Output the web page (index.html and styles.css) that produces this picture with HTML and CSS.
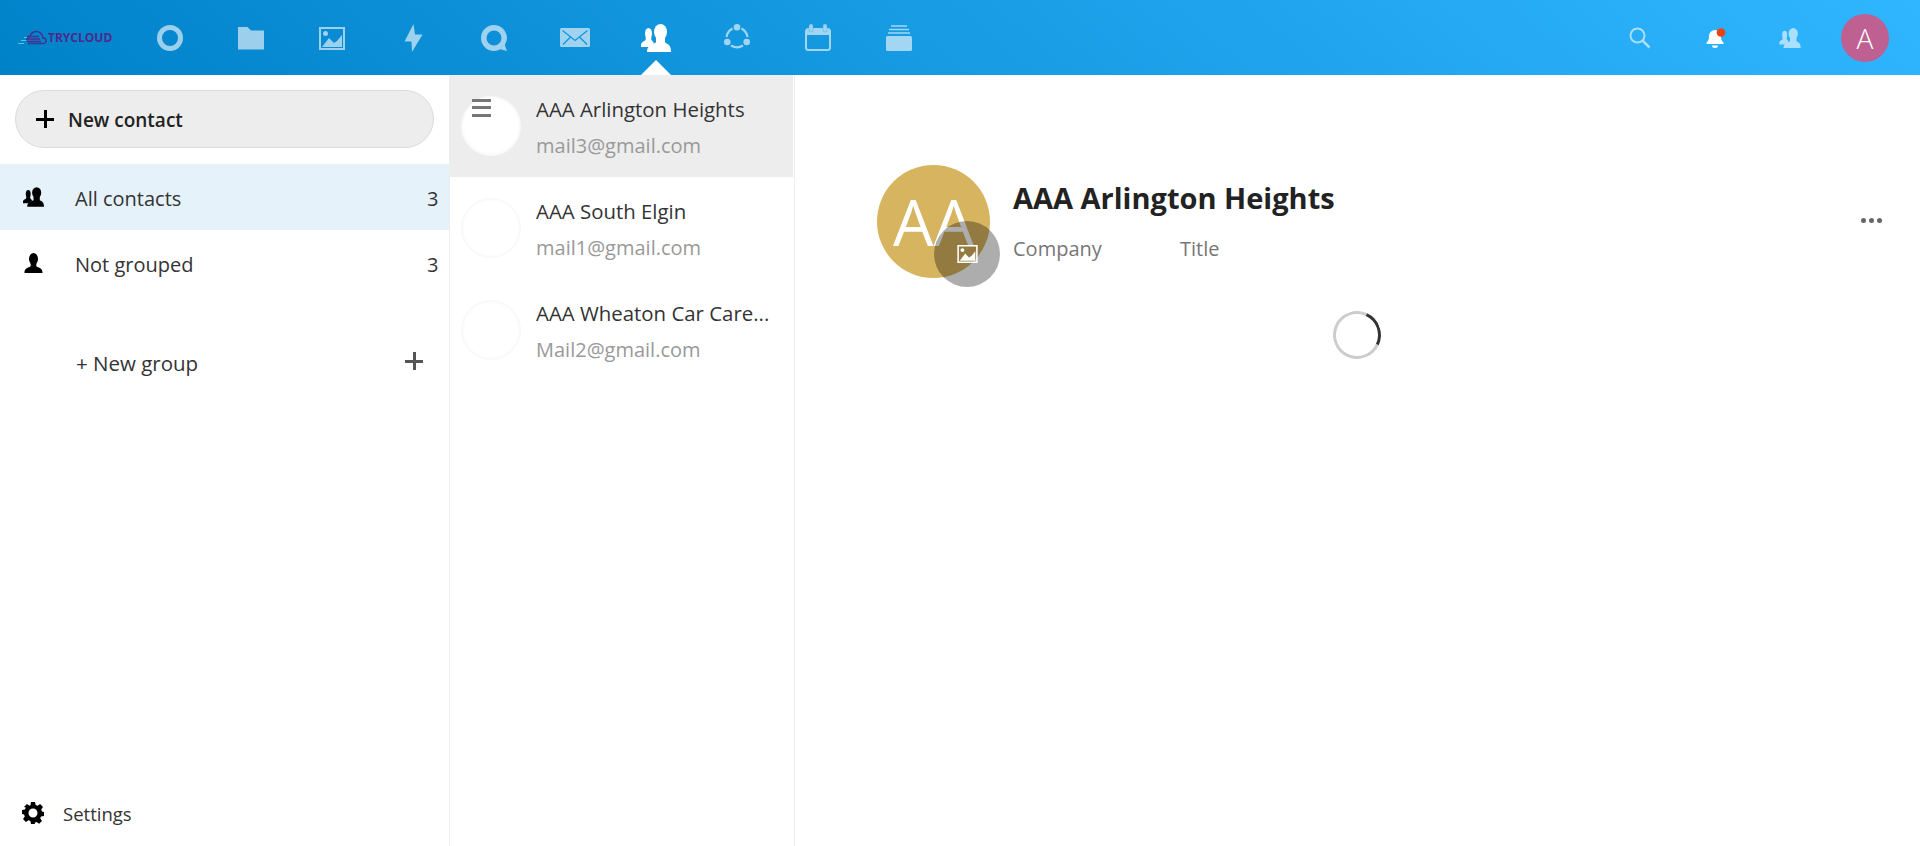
FILE: index.html
```html
<!DOCTYPE html>
<html lang="en">

<head>
    <meta charset="UTF-8">
    <meta name="viewport" content="width=device-width, initial-scale=1.0">
    <title>Contacts - TryCloud</title>
    <link rel="stylesheet" href="styles.css">
</head>

<body>
    <svg class="defs" width="0" height="0">
        <defs>
            <g id="people" fill="currentColor">
                <ellipse cx="19.5" cy="8" rx="6.5" ry="8" />
                <path d="M6 28C6 22 10 20.500 15 18.500L15 14h9v4.500C28 20.500 30 22 30 28z" />
                <ellipse cx="7.5" cy="9.5" rx="3.5" ry="5.5" />
                <path d="M0 21C0 18.500 1.500 18 4 16.500C5 15.500 5 14 4.500 13h6c-.5 1-.5 2.500 .5 3.500l2 2.500L8 23H0z" />
            </g>
        </defs>
    </svg>

    <header class="topbar">
        <div class="logo">
            <svg class="logo-cloud" width="29" height="16" viewBox="0 0 29 16">
                <path d="M10 13.500H25.500C29 13.500 29 8 25 8C25 4 21 1 17.500 1.500C14.500 2 12.500 4 12 6.500C10.500 6.500 9 8 9 9.500" fill="none" stroke="#4b2a8c" stroke-width="1.500" />
                <path d="M9 6.500h12M8 9h14M9 11.500h14" stroke="#4b2a8c" stroke-width="1.300" />
                <path d="M0 13.500h6M3 10.500h5M6 7.500h3" stroke="#5fd0d8" stroke-width="1.200" />
            </svg>
            <span>TRYCLOUD</span>
        </div>

        <nav class="apps">
            <a class="app">
                <svg width="26" height="26" viewBox="0 0 26 26"><circle cx="13" cy="13" r="10.500" fill="none" stroke="#fff" stroke-width="5" /></svg>
            </a>
            <a class="app">
                <svg width="26" height="26" viewBox="0 0 26 26"><path d="M0 2h9.500l3.500 3.500h13V24.500H0z" fill="#fff" /></svg>
            </a>
            <a class="app">
                <svg width="26" height="26" viewBox="0 0 26 26"><path fill-rule="evenodd" d="M0 2h26v23H0zM2 4v19h22V4z" fill="#fff" /><circle cx="6.500" cy="8.500" r="2.500" fill="#fff" /><path d="M3 22l7-9 5 5 3-2 5-6v12z" fill="#fff" /></svg>
            </a>
            <a class="app">
                <svg width="26" height="28" viewBox="0 0 26 28"><path d="M13.500 0L4.500 17.500H11.500L12 28L22.500 10.500H15z" fill="#fff" /></svg>
            </a>
            <a class="app">
                <svg width="26" height="26" viewBox="0 0 26 26"><path fill-rule="evenodd" d="M13 0a13 13 0 0 0 0 26c2.500 0 4.500-.7 6.300-1.700L26 26l-2.200-6A13 13 0 0 0 13 0zm0 5.500a7.500 7.500 0 1 1 0 15 7.500 7.500 0 0 1 0-15z" fill="#fff" /></svg>
            </a>
            <a class="app">
                <svg width="30" height="20" viewBox="0 0 30 20"><rect y="0" width="30" height="19" rx="1.500" fill="#fff" /><path d="M2.500 2.500L15 12.500L27.500 2.500M3 16.500L10.500 9M27 16.500L19.500 9" fill="none" stroke="#1797e3" stroke-width="1.300" /></svg>
            </a>
            <a class="app app-active">
                <svg class="people" width="30" height="28" viewBox="0 0 30 28"><use href="#people" /></svg>
            </a>
            <a class="app">
                <svg width="26" height="27" viewBox="0 0 26 27"><path d="M8.500 4.500A11.500 11.500 0 0 0 2.500 13M7 21.500a11.500 11.500 0 0 0 12 0M23.500 13A11.500 11.500 0 0 0 17.500 4.500" fill="none" stroke="#fff" stroke-width="2.200" /><circle cx="13" cy="3.300" r="3.300" fill="#fff" /><circle cx="3.300" cy="18" r="3.300" fill="#fff" /><circle cx="22.700" cy="18" r="3.300" fill="#fff" /></svg>
            </a>
            <a class="app">
                <svg width="26" height="27" viewBox="0 0 26 27"><rect x="1" y="5" width="24" height="21" rx="2.500" fill="none" stroke="#fff" stroke-width="2" /><rect x="1" y="5" width="24" height="6" fill="#fff" /><rect x="4" y="0" width="4" height="8" rx="2" fill="#fff" stroke="#62b9ec" stroke-width=".5" /><rect x="18" y="0" width="4" height="8" rx="2" fill="#fff" stroke="#62b9ec" stroke-width=".5" /></svg>
            </a>
            <a class="app">
                <svg width="26" height="26" viewBox="0 0 26 26"><rect y="11" width="26" height="15" rx="1.500" fill="#fff" /><path d="M2 8h22M3 4.500h20M5 1h16" stroke="#fff" stroke-width="1.500" /></svg>
            </a>
        </nav>

        <div class="top-right">
            <a class="tool">
                <svg width="22" height="22" viewBox="0 0 22 22"><circle cx="8.500" cy="8.500" r="7" fill="none" stroke="#fff" stroke-width="2" /><path d="M13.500 13.500l7 7" stroke="#fff" stroke-width="2.500" /></svg>
            </a>
            <a class="tool tool-on">
                <svg width="24" height="22" viewBox="0 0 24 22"><path d="M12 3a6 6 0 0 0-6 6c0 3-.5 5-2.500 6.500V17h17v-1.500C18.500 14 18 12 18 9a6 6 0 0 0-6-6z" fill="#fff" /><path d="M9 18.500h6a3 2.500 0 0 1-6 0z" fill="#fff" /><circle cx="18" cy="5.500" r="4.300" fill="#f1410f" /></svg>
            </a>
            <a class="tool">
                <svg class="people" width="22" height="20" viewBox="0 0 30 28"><use href="#people" /></svg>
            </a>
            <div class="user">A</div>
        </div>
        <span class="arrow"></span>
    </header>

    <div class="layout">
        <aside class="sidebar">
            <div class="new-wrap">
                <button class="new-contact"><span class="plus plus-black"></span>New contact</button>
            </div>

            <ul class="groups">
                <li class="group group-active">
                    <svg class="group-icon" width="21" height="20" viewBox="0 0 30 28"><use href="#people" /></svg>
                    <span class="group-name">All contacts</span>
                    <span class="count">3</span>
                </li>
                <li class="group">
                    <svg class="group-icon" width="21" height="20" viewBox="0 0 20 20"><ellipse cx="10" cy="6" rx="4.500" ry="6" /><path d="M1 20c0-3.500 1-4.500 5-6 1.500-.7 1.500-2 1-3h6c-.5 1-.5 2.300 1 3 4 1.500 5 2.500 5 6z" /></svg>
                    <span class="group-name">Not grouped</span>
                    <span class="count">3</span>
                </li>
                <li class="group group-new">
                    <span class="group-name">+ New group</span>
                    <span class="plus plus-grey"></span>
                </li>
            </ul>

            <div class="settings">
                <svg class="group-icon" width="22" height="22" viewBox="0 0 22 22"><path fill-rule="evenodd" d="M9 0h4l.6 3 2 .8L18.100 2 21 4.900l-1.800 2.500.8 2 2 .6v4l-3 .6-.8 1.600 1.800 2.700-2.900 2.900-2.500-1.800-1.900.8L13 22H9l-.6-3-1.900-.8L3.900 20 1 17.100l1.800-2.600-.8-1.900-2-.6V8l3-.6.800-2L2 4.900 4.900 2l2.600 1.800 1-.8zM11 6.500a4.500 4.500 0 1 0 0 9 4.500 4.500 0 0 0 0-9z" /></svg>
                <span>Settings</span>
            </div>
        </aside>

        <section class="list">
            <div class="contact contact-active">
                <span class="handle"></span>
                <div class="avatar"></div>
                <div class="contact-text">
                    <div class="contact-name">AAA Arlington Heights</div>
                    <div class="contact-mail">mail3@gmail.com</div>
                </div>
            </div>
            <div class="contact">
                <div class="avatar"></div>
                <div class="contact-text">
                    <div class="contact-name">AAA South Elgin</div>
                    <div class="contact-mail">mail1@gmail.com</div>
                </div>
            </div>
            <div class="contact">
                <div class="avatar"></div>
                <div class="contact-text">
                    <div class="contact-name">AAA Wheaton Car Care...</div>
                    <div class="contact-mail">Mail2@gmail.com</div>
                </div>
            </div>
        </section>

        <main class="details">
            <div class="details-head">
                <div class="photo">
                    <span>AA</span>
                    <div class="photo-btn">
                        <svg width="21" height="18" viewBox="0 0 26 23"><path fill-rule="evenodd" d="M0 0h26v23H0zM2 2v19h22V2z" fill="#fff" /><circle cx="6.500" cy="6.500" r="2.500" fill="#fff" /><path d="M3 20l7-9 5 5 3-2 5-6v12z" fill="#fff" /></svg>
                    </div>
                </div>
                <div class="details-info">
                    <h1>AAA Arlington Heights</h1>
                    <div class="org">
                        <span class="org-company">Company</span>
                        <span>Title</span>
                    </div>
                </div>
                <div class="dots"><i></i><i></i><i></i></div>
            </div>
            <div class="spinner"></div>
        </main>
    </div>
</body>

</html>
```

FILE: styles.css
```css
* {
    box-sizing: border-box;
    font-family: "Open Sans", "Noto Sans", sans-serif;
}

html,
body {
    margin: 0;
    height: 100%;
    overflow: hidden;
    background-color: white;
}

svg {
    display: block;
}

.defs {
    position: absolute;
}

.topbar {
    position: relative;
    display: flex;
    align-items: center;
    height: 75px;
    background: linear-gradient(40deg, #0082c9 0%, #30b6ff 100%);
}

.logo {
    display: flex;
    align-items: center;
    width: 129px;
    padding-left: 18px;
    color: #4b2a8c;
    font-size: 12px;
    font-weight: 700;
}

.logo-cloud {
    margin-right: 1px;
    opacity: 0.9;
}

.apps {
    display: flex;
    flex: 1;
}

.app {
    display: flex;
    align-items: center;
    justify-content: center;
    width: 81px;
    height: 75px;
    opacity: 0.6;
}

.app-active {
    opacity: 1;
}

.people {
    color: white;
}

.top-right {
    display: flex;
    align-items: center;
    padding-right: 31px;
}

.tool {
    display: flex;
    align-items: center;
    justify-content: center;
    width: 75px;
    height: 75px;
    opacity: 0.6;
}

.tool-on {
    opacity: 1;
}

.user {
    width: 48px;
    height: 48px;
    margin-left: 14px;
    border-radius: 50%;
    background-color: #be6091;
    color: white;
    font-size: 28px;
    font-weight: 300;
    line-height: 48px;
    text-align: center;
}

.arrow {
    position: absolute;
    left: 641px;
    bottom: 0;
    border-left: 15px solid transparent;
    border-right: 15px solid transparent;
    border-bottom: 15px solid white;
}

.layout {
    display: grid;
    grid-template-columns: 450px 345px 1fr;
    height: calc(100% - 75px);
}

/* left column */
.sidebar {
    display: flex;
    flex-direction: column;
    border-right: 1px solid #ededed;
}

.new-wrap {
    padding: 15px 15px 16px;
}

.new-contact {
    display: flex;
    align-items: center;
    width: 419px;
    height: 58px;
    padding: 2px 0 0 20px;
    background-color: #ededed;
    border: 1px solid #dbdbdb;
    border-radius: 29px;
    color: #222;
    font-size: 19px;
    font-weight: 600;
}

.plus {
    position: relative;
    display: block;
    width: 18px;
    height: 18px;
}

.plus::before,
.plus::after {
    content: "";
    position: absolute;
    background-color: currentColor;
}

.plus::before {
    left: 0;
    right: 0;
    top: 8px;
    height: 3px;
}

.plus::after {
    top: 0;
    bottom: 0;
    left: 8px;
    width: 3px;
}

.plus-black {
    margin: -2px 14px 0 0;
    color: black;
}

.plus-grey {
    margin: -5px 26px 0 0;
    color: #555;
}

.groups {
    flex: 1;
    margin: 0;
    padding: 0;
    list-style: none;
}

.group {
    display: flex;
    align-items: center;
    height: 66px;
    padding-left: 23px;
    color: #333;
    font-size: 20px;
}

.group-active {
    background-color: #e5f2fa;
}

.group-new {
    justify-content: space-between;
    margin-top: 34px;
    padding-left: 76px;
    font-size: 20.5px;
}

.group-icon {
    flex: none;
    margin-right: 31px;
    color: black;
}

.group-name {
    flex: 1;
    padding-top: 2px;
}

.group-new .group-name {
    flex: none;
    padding-top: 0;
}

.count {
    width: 22px;
    padding-top: 2px;
}

.settings {
    display: flex;
    align-items: center;
    height: 62px;
    padding: 0 0 4px 22px;
    color: #333;
    font-size: 18.5px;
}

.settings .group-icon {
    margin-right: 19px;
}

/* contact list */
.list {
    border-right: 1px solid #ededed;
}

.contact {
    position: relative;
    display: flex;
    align-items: center;
    height: 102px;
    margin-right: 1px;
    padding-left: 11px;
}

.contact-active {
    background-color: #ededed;
}

.handle {
    position: absolute;
    left: 22px;
    top: 24px;
    width: 19px;
    height: 18px;
    border-top: 3px solid #777;
    border-bottom: 3px solid #777;
}

.handle::after {
    content: "";
    display: block;
    height: 3px;
    margin-top: 4px;
    background-color: #777;
}

.avatar {
    flex: none;
    width: 60px;
    height: 60px;
    border-radius: 50%;
    background-color: white;
    box-shadow: inset 0 0 4px rgba(0, 0, 0, 0.07);
}

.contact-text {
    width: 258px;
    min-width: 0;
    padding: 4px 0 0 15px;
}

.contact-name {
    overflow: hidden;
    color: #333;
    font-size: 20.4px;
    line-height: 36px;
    white-space: nowrap;
    text-overflow: ellipsis;
}

.contact-mail {
    color: #999;
    font-size: 20px;
    line-height: 38px;
}

/* details */
.details-head {
    display: flex;
    padding: 90px 38px 0 82px;
}

.photo {
    position: relative;
    flex: none;
    width: 113px;
    height: 113px;
    border-radius: 50%;
    background-color: #d7b45f;
    color: white;
    font-size: 64px;
    line-height: 113px;
    text-align: center;
}

.photo-btn {
    position: absolute;
    left: 57px;
    top: 56px;
    display: flex;
    align-items: center;
    justify-content: center;
    width: 66px;
    height: 66px;
    border-radius: 50%;
    background-color: rgba(0, 0, 0, 0.32);
}

.details-info {
    flex: 1;
    padding-left: 23px;
}

.details-info h1 {
    margin: 13px 0 0;
    color: #222;
    font-size: 29px;
    font-weight: 700;
    line-height: 40px;
}

.org {
    display: flex;
    margin-top: 16px;
    color: #777;
    font-size: 20px;
    line-height: 30px;
}

.org-company {
    width: 167px;
}

.dots {
    display: flex;
    gap: 3px;
    margin-top: 53px;
}

.dots i {
    width: 5px;
    height: 5px;
    border-radius: 50%;
    background-color: #666;
}

.spinner {
    width: 48px;
    height: 48px;
    margin: 33px 0 0 538px;
    border: 3px solid #ccc;
    border-right-color: #333;
    border-radius: 50%;
    transform: rotate(-20deg);
}
```
